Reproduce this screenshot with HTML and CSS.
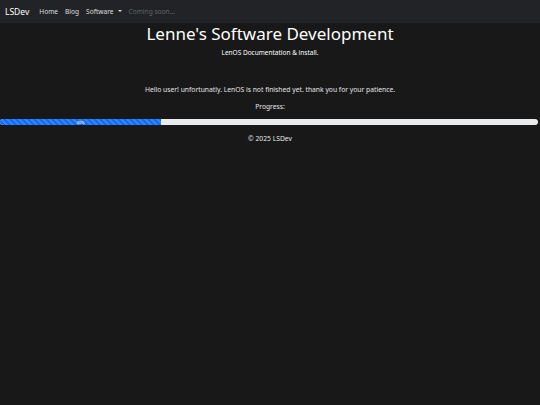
FILE: index.html
```html
<!DOCTYPE html>
<html lang="en">
<head>
    <meta charset="UTF-8">
    <meta name="viewport" content="width=device-width, initial-scale=1.0">
    <title>LSDev - LenOS</title>
    <link rel="stylesheet" href="styles.css">
</head>
<body>
    <nav class="navbar">
        <a class="brand" href="#">LSDev</a>
        <ul class="nav-links">
            <li><a href="#">Home</a></li>
            <li><a href="#">Blog</a></li>
            <li><a href="#" class="dropdown">Software</a></li>
            <li><a href="#" class="disabled">Coming soon...</a></li>
        </ul>
    </nav>

    <header class="hero">
        <h1>Lenne's Software Development</h1>
        <p class="lead">LenOS Documentation &amp; install.</p>
    </header>

    <main class="content">
        <p>Hello user! unfortunatly. LenOS is not finished yet. thank you for your patience.</p>
        <p>Progress:</p>
        <div class="progress">
            <div class="progress-bar" style="width: 30%">30%</div>
        </div>
    </main>

    <footer class="footer">
        <p>&copy; 2025 LSDev</p>
    </footer>
</body>
</html>
```

FILE: styles.css
```css
body {
    margin: 0;
    background: #181818;
    color: #e6e6e6;
    font-family: "Noto Sans", "Open Sans", sans-serif;
    font-size: 6.75px;
}
a {
    text-decoration: none;
}
.navbar {
    display: flex;
    align-items: center;
    height: 23px;
    padding: 0 5px;
    background: #212326;
}
.brand {
    color: #fff;
    font-size: 8.5px;
    margin-right: 10px;
}
.nav-links {
    display: flex;
    gap: 7px;
    list-style: none;
    margin: 0;
    padding: 0;
}
.nav-links a {
    color: rgba(255, 255, 255, 0.85);
    font-size: 6.6px;
}
.nav-links a.disabled {
    color: rgba(255, 255, 255, 0.3);
}
.dropdown::after {
    content: "";
    display: inline-block;
    margin-left: 4px;
    vertical-align: 2px;
    border-top: 2.5px solid;
    border-left: 2.5px solid transparent;
    border-right: 2.5px solid transparent;
}
.hero {
    text-align: center;
    color: #fff;
}
.hero h1 {
    margin: 0;
    padding-top: 1px;
    font-size: 17px;
    font-weight: 400;
    line-height: 1.2;
}
.lead {
    margin: 4px 0 0;
    font-size: 6.5px;
}
.content {
    text-align: center;
    padding-top: 28px;
}
.content p {
    margin: 0 0 8px;
}
.progress {
    display: flex;
    height: 6px;
    margin-right: 2px;
    background: #e9ecef;
    border-radius: 3px;
    overflow: hidden;
}
.progress-bar {
    display: flex;
    align-items: center;
    justify-content: center;
    color: #fff;
    font-size: 4px;
    background-color: #0d6efd;
    background-image: linear-gradient(45deg, rgba(255,255,255,.15) 25%, transparent 25%, transparent 50%, rgba(255,255,255,.15) 50%, rgba(255,255,255,.15) 75%, transparent 75%, transparent);
    background-size: 6px 6px;
}
.footer {
    text-align: center;
}
.footer p {
    margin: 9px 0;
}
```
